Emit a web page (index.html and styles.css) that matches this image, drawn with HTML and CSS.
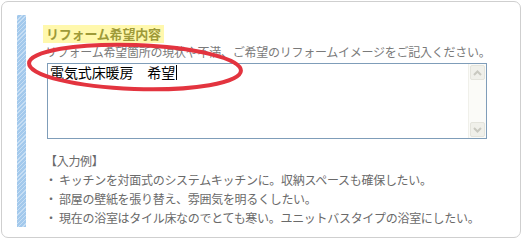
FILE: index.html
```html
<!DOCTYPE html>
<html lang="ja">
  <head>
    <meta charset="UTF-8" />
    <title>リフォーム希望内容</title>
    <link rel="stylesheet" href="styles.css">
  </head>
  <body>
    <div class="panel">
      <div class="section">
        <div class="stripe"></div>
        <div class="content">
          <h3 class="title">リフォーム希望内容</h3>
          <p class="lead">リフォーム希望箇所の現状や不満、ご希望のリフォームイメージをご記入ください。</p>
          <div class="textbox">
            <div class="textbox-text">電気式床暖房　希望<span class="caret"></span></div>
            <div class="scrollbar">
              <div class="scroll-btn">
                <svg width="9" height="6" viewBox="0 0 9 6"><path d="M1 5 L4.5 1.5 L8 5" fill="none" stroke="#c9c9c0" stroke-width="2"/></svg>
              </div>
              <div class="scroll-track"></div>
              <div class="scroll-btn">
                <svg width="9" height="6" viewBox="0 0 9 6"><path d="M1 1 L4.5 4.5 L8 1" fill="none" stroke="#c9c9c0" stroke-width="2"/></svg>
              </div>
            </div>
          </div>
          <ul class="examples">
            <li class="examples-head">【入力例】</li>
            <li>・ キッチンを対面式のシステムキッチンに。収納スペースも確保したい。</li>
            <li>・ 部屋の壁紙を張り替え、雰囲気を明るくしたい。</li>
            <li>・ 現在の浴室はタイル床なのでとても寒い。ユニットバスタイプの浴室にしたい。</li>
          </ul>
        </div>
      </div>
    </div>

    <!-- annotation circle drawn over the form -->
    <svg class="mark" width="525" height="240" viewBox="0 0 525 240">
      <ellipse cx="135" cy="67" rx="106" ry="22" transform="rotate(2 135 67)"
        fill="none" stroke="#e3343f" stroke-width="4" />
    </svg>
  </body>
</html>
```

FILE: styles.css
```css
body {
  margin: 0;
  background-color: #fff;
  font-family: "Noto Sans CJK JP", "Noto Sans", sans-serif;
  position: relative;
  width: 525px;
  height: 240px;
  overflow: hidden;
}

.panel {
  box-sizing: border-box;
  margin: 1px 4px 0 1px;
  height: 237px;
  border: 1px solid #cfcfcf;
  border-radius: 7px;
  padding: 13px 0 0 15px;
}

.section {
  display: flex;
}

.stripe {
  width: 9px;
  height: 212px;
  background-image: repeating-linear-gradient(
    -45deg,
    #a3c9ec 0,
    #a3c9ec 2px,
    #c6def4 2px,
    #c6def4 3px
  );
}

.content {
  margin-left: 17px;
  padding-top: 10px;
}

.title {
  width: fit-content;
  margin: 0;
  padding: 0 3px;
  height: 18px;
  line-height: 18px;
  font-size: 13px;
  font-weight: bold;
  letter-spacing: -0.2px;
  color: #9e9a38;
  background-color: #fff8ad;
}

.lead {
  margin: 0 0 2px;
  padding-left: 2px;
  line-height: 18px;
  font-size: 12px;
  letter-spacing: -0.25px;
  color: #7a7a7a;
}

.textbox {
  box-sizing: border-box;
  display: flex;
  margin-left: 4px;
  width: 440px;
  height: 76px;
  border: 1px solid #7f9db9;
  background-color: #fff;
}

.textbox-text {
  flex: 1;
  padding: 0 2px;
  line-height: 16px;
  font-size: 14px;
  letter-spacing: -0.1px;
  color: #000;
}

.caret {
  display: inline-block;
  width: 1px;
  height: 15px;
  margin-left: 1px;
  vertical-align: -2px;
  background-color: #000;
}

.scrollbar {
  width: 17px;
  display: flex;
  flex-direction: column;
  background-color: #fbfbf8;
  border-left: 1px solid #f0f0ea;
}

.scroll-btn {
  box-sizing: border-box;
  height: 15px;
  margin: 1px 1px;
  display: flex;
  justify-content: center;
  align-items: center;
  border: 1px solid #e4e4dc;
  border-radius: 2px;
  background-color: #f0f0ea;
}

.scroll-track {
  flex: 1;
}

.examples {
  list-style: none;
  margin: 12px 0 0;
  padding: 0 0 0 2px;
  font-size: 12px;
  line-height: 19px;
  letter-spacing: -0.3px;
  color: #6a6a6a;
}

.mark {
  position: absolute;
  left: 0;
  top: 0;
  pointer-events: none;
}
```
